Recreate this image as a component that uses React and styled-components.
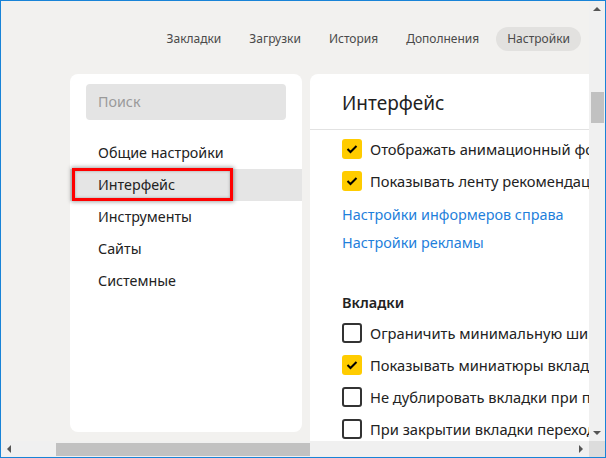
import styled, { createGlobalStyle } from "styled-components";

const GlobalStyle = createGlobalStyle`
  html, body {
    margin: 0;
    padding: 0;
    background: #ffffff;
  }
  * {
    box-sizing: border-box;
  }
`;

const Window = styled.div`
  width: 606px;
  height: 458px;
  border: 1px solid #1883d7;
  background: #f2f1ef;
  display: grid;
  grid-template-columns: 1fr 16px;
  grid-template-rows: 1fr 16px;
  font-family: "Noto Sans", "Open Sans", sans-serif;
  overflow: hidden;
`;

const Viewport = styled.div`
  overflow: hidden;
  padding: 26px 8px 0 69px;
`;

const Nav = styled.nav`
  display: flex;
  justify-content: flex-end;
  gap: 6px;
`;

const NavItem = styled.div`
  height: 24px;
  line-height: 24px;
  padding: 0 11px;
  border-radius: 12px;
  font-size: 12px;
  color: #4a4a4a;
  white-space: nowrap;
  background: ${(p) => (p.$active ? "#e2e1df" : "transparent")};
`;

const Cards = styled.div`
  display: flex;
  align-items: flex-start;
  gap: 8px;
  margin-top: 23px;
`;

const Sidebar = styled.div`
  flex: 0 0 232px;
  height: 358px;
  background: #ffffff;
  border-radius: 8px;
  padding-top: 10px;
`;

const Search = styled.div`
  margin: 0 16px;
  height: 36px;
  border-radius: 4px;
  background: #e4e4e4;
  color: #9a9a9a;
  font-size: 14.3px;
  line-height: 36px;
  padding-left: 12px;
`;

const Menu = styled.ul`
  list-style: none;
  margin: 17px 0 0;
  padding: 0;
`;

const MenuItem = styled.li`
  position: relative;
  height: 32px;
  line-height: 32px;
  padding-left: 28px;
  font-size: 14.3px;
  color: #222222;
  background: ${(p) => (p.$active ? "#e5e5e5" : "transparent")};
`;

const Highlight = styled.span`
  position: absolute;
  left: 2px;
  top: -1px;
  width: 161px;
  height: 33px;
  border: 3px solid #ff0000;
  box-shadow: 0 0 4px 1px rgba(0, 0, 0, 0.35), inset 0 0 3px rgba(0, 0, 0, 0.3);
`;

const Main = styled.div`
  flex: 0 0 420px;
  height: 420px;
  background: #ffffff;
  border-radius: 8px 8px 0 0;
`;

const MainHeader = styled.div`
  height: 56px;
  padding: 16px 32px 0;
  border-bottom: 1px solid #e2e2e2;
  font-size: 19px;
  line-height: 26px;
  color: #222222;
`;

const Section = styled.div`
  padding: ${(p) => p.$top}px 32px 0;
`;

const SectionTitle = styled.div`
  height: 24px;
  line-height: 24px;
  font-size: 14.5px;
  font-weight: 600;
  color: #222222;
  margin-bottom: 3px;
`;

const Row = styled.div`
  display: flex;
  align-items: center;
  gap: 8px;
  height: 32px;
  font-size: 14.7px;
  color: #222222;
  white-space: nowrap;
`;

const Box = styled.span`
  flex: 0 0 20px;
  width: 20px;
  height: 20px;
  border-radius: 3px;
  display: flex;
  align-items: center;
  justify-content: center;
  background: ${(p) => (p.$checked ? "#ffcc00" : "#ffffff")};
  border: ${(p) => (p.$checked ? "none" : "2px solid #333333")};
`;

const Links = styled.div`
  margin-top: 4px;
`;

const Link = styled.a`
  display: block;
  height: 28px;
  line-height: 28px;
  font-size: 14.4px;
  color: #1f7fdb;
  text-decoration: none;
  white-space: nowrap;
`;

const VScroll = styled.div`
  display: flex;
  flex-direction: column;
  align-items: center;
  background: #f0f0f0;
`;

const HScroll = styled.div`
  display: flex;
  align-items: center;
  background: #f0f0f0;
`;

const Corner = styled.div`
  background: #dcdcdc;
`;

const ArrowSlot = styled.div`
  flex: 0 0 16px;
  width: 16px;
  height: 16px;
  display: flex;
  align-items: center;
  justify-content: center;
`;

const Arrow = styled.span`
  width: 0;
  height: 0;
  border: 4px solid transparent;
  ${(p) => p.$dir === "up" && "border-bottom-color: #555; border-top-width: 0;"}
  ${(p) => p.$dir === "down" && "border-top-color: #555; border-bottom-width: 0;"}
  ${(p) => p.$dir === "left" && "border-right-color: #555; border-left-width: 0;"}
  ${(p) => p.$dir === "right" && "border-left-color: #555; border-right-width: 0;"}
`;

const VThumb = styled.div`
  width: 13px;
  height: 31px;
  margin-top: 75px;
  background: #c1c1c1;
`;

const HThumb = styled.div`
  height: 13px;
  width: 254px;
  margin-left: 39px;
  background: #c1c1c1;
`;

const Spacer = styled.div`
  flex: 1;
`;

const Check = () => (
  <svg width="14" height="14" viewBox="0 0 14 14">
    <polyline points="2.5,7 5.5,10 11.5,4" fill="none" stroke="#000" strokeWidth="2" />
  </svg>
);

const Option = ({ checked, children }) => (
  <Row>
    <Box $checked={checked}>{checked && <Check />}</Box>
    {children}
  </Row>
);

const navItems = ["Закладки", "Загрузки", "История", "Дополнения", "Настройки"];
const menu = ["Общие настройки", "Интерфейс", "Инструменты", "Сайты", "Системные"];

export default function App() {
  return (
    <>
      <GlobalStyle />
      <Window>
        <Viewport>
          <Nav>
            {navItems.map((n) => (
              <NavItem key={n} $active={n === "Настройки"}>
                {n}
              </NavItem>
            ))}
          </Nav>
          <Cards>
            <Sidebar>
              <Search>Поиск</Search>
              <Menu>
                {menu.map((m) => (
                  <MenuItem key={m} $active={m === "Интерфейс"}>
                    {m}
                    {m === "Интерфейс" && <Highlight />}
                  </MenuItem>
                ))}
              </Menu>
            </Sidebar>
            <Main>
              <MainHeader>Интерфейс</MainHeader>
              <Section $top={3}>
                <Option checked>Отображать анимационный фон в новой вкладке</Option>
                <Option checked>Показывать ленту рекомендаций Дзен</Option>
                <Links>
                  <Link href="#">Настройки информеров справа</Link>
                  <Link href="#">Настройки рекламы</Link>
                </Links>
              </Section>
              <Section $top={33}>
                <SectionTitle>Вкладки</SectionTitle>
                <Option>Ограничить минимальную ширину вкладки</Option>
                <Option checked>Показывать миниатюры вкладок</Option>
                <Option>Не дублировать вкладки при переходе</Option>
                <Option>При закрытии вкладки переходить к предыдущей</Option>
              </Section>
            </Main>
          </Cards>
        </Viewport>
        <VScroll>
          <ArrowSlot>
            <Arrow $dir="up" />
          </ArrowSlot>
          <VThumb />
          <Spacer />
          <ArrowSlot>
            <Arrow $dir="down" />
          </ArrowSlot>
        </VScroll>
        <HScroll>
          <ArrowSlot>
            <Arrow $dir="left" />
          </ArrowSlot>
          <HThumb />
          <Spacer />
          <ArrowSlot>
            <Arrow $dir="right" />
          </ArrowSlot>
        </HScroll>
        <Corner />
      </Window>
    </>
  );
}
